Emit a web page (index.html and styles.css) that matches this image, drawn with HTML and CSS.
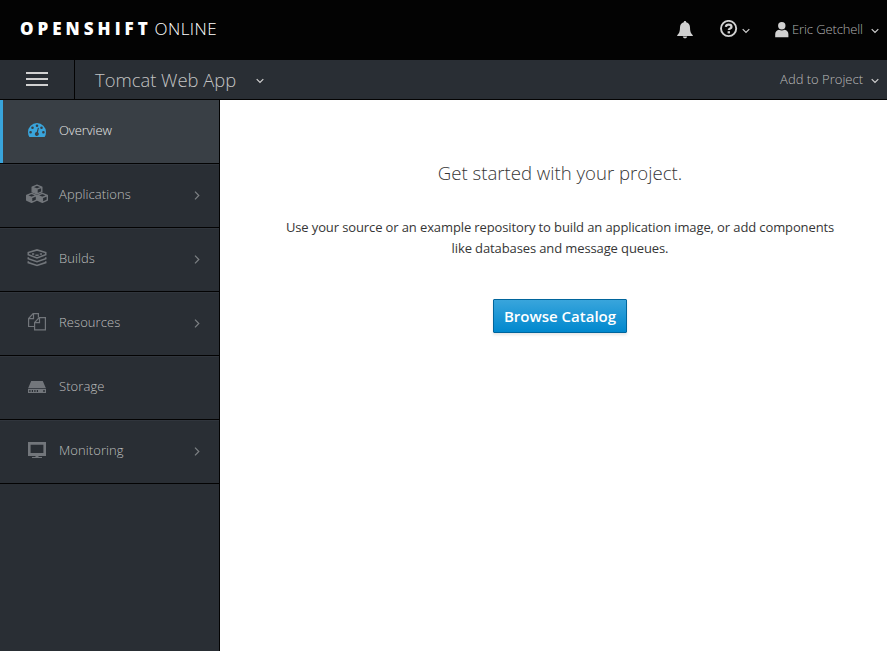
FILE: index.html
```html
<!DOCTYPE html>
<html lang="en">
<head>
<meta charset="utf-8">
<title>OpenShift Online</title>
<link rel="stylesheet" href="styles.css">
</head>
<body>
<header class="masthead">
  <div class="brand"><b>OPENSHIFT</b><span>ONLINE</span></div>
  <div class="utilities">
    <svg class="bell" width="16" height="18" viewBox="0 0 16 18"><path d="M8 0c.8 0 1.200.5 1.200 1.300C11.900 2 13 4 13 6.500c0 4 .8 5.800 2.800 7.700v.8H.2v-.8C2.200 12.300 3 10.500 3 6.500 3 4 4.100 2 6.800 1.300 6.800.5 7.200 0 8 0zM5.800 15.500h4.400C10 16.700 9.200 17.300 8 17.300s-2-.6-2.200-1.800z"/></svg>
    <svg class="help" width="18" height="18" viewBox="0 0 18 18"><circle cx="8.600" cy="8.500" r="7.600" fill="none" stroke="currentColor" stroke-width="1.900"/><path d="M5.900 6.900C6.100 5.300 7 4.700 8.700 4.700c1.700 0 2.800.8 2.800 2.200 0 1.800-2.700 1.500-2.700 3.200" fill="none" stroke="currentColor" stroke-width="2.300"/><rect x="7.600" y="11.200" width="2.400" height="2.200"/></svg>
    <svg class="chev help-chev" width="8" height="6" viewBox="0 0 8 6"><path d="M.7 1.200 4 4.500l3.300-3.300"/></svg>
    <svg class="person" width="14" height="17" viewBox="0 0 14 17"><circle cx="6.800" cy="3.700" r="3.700"/><path d="M.2 15.300v-3C.2 9.800 1.800 8.300 4 7.800c1.700 1 3.900 1 5.600 0 2.200.5 3.800 2 3.800 4.500v3z"/></svg>
    <span class="user">Eric Getchell</span>
    <svg class="chev user-chev" width="8" height="6" viewBox="0 0 8 6"><path d="M.7 1.200 4 4.500l3.300-3.300"/></svg>
  </div>
</header>
<div class="projectbar">
  <div class="toggle"><i></i><i></i><i></i></div>
  <div class="project">Tomcat Web App</div>
  <svg class="chev project-chev" width="8" height="6" viewBox="0 0 8 6"><path d="M.7 1.200 4 4.500l3.300-3.300"/></svg>
  <div class="add">Add to Project</div>
  <svg class="chev add-chev" width="8" height="6" viewBox="0 0 8 6"><path d="M.7 1.200 4 4.500l3.300-3.300"/></svg>
</div>
<div class="shell">
  <nav class="sidebar">
    <a class="item active">
      <svg class="icon" width="22" height="20" viewBox="0 0 22 20"><path fill-rule="evenodd" d="M3.400 17A8.600 8.600 0 0 1 2 12a9 9 0 0 1 18 0 8.600 8.600 0 0 1-1.400 5zM4.600 10.900a1.300 1.300 0 1 0 0 2.600 1.300 1.300 0 0 0 0-2.600zM6.500 6.400a1.300 1.300 0 1 0 0 2.600 1.300 1.300 0 0 0 0-2.600zM11 4.500a1.300 1.300 0 1 0 0 2.600 1.300 1.300 0 0 0 0-2.600zM15.500 6.400a1.300 1.300 0 1 0 0 2.600 1.300 1.300 0 0 0 0-2.600zM17.400 10.900a1.300 1.300 0 1 0 0 2.600 1.300 1.300 0 0 0 0-2.600zM12.900 8l-1-.3-1.200 4.300a2 2 0 1 0 1.200.3z"/></svg>
      <span>Overview</span>
    </a>
    <a class="item">
      <svg class="icon" width="22" height="20" viewBox="0 0 22 20"><g fill="none" stroke="currentColor" stroke-width="1.400" stroke-linejoin="round"><path d="m11 1.200 4.800 1.900v4.700L11 9.900 6.200 7.800V3.100zM6.200 3.200 11 5.200l4.800-2M11 5.200v4.500"/><path d="m5.600 9.400 4.900 2v4.700l-4.900 2.300-4.900-2.300v-4.700zM.7 11.500l4.900 2 4.900-2M5.600 13.500v4.700"/><path d="m16.400 9.400 4.900 2v4.700l-4.900 2.300-4.900-2.300v-4.700zM11.500 11.500l4.900 2 4.900-2M16.400 13.500v4.700"/></g><path d="m6.200 3.200 4.800 2v4.500L6.200 7.800zM.7 11.500l4.900 2v4.900L.7 16.100zM11.500 11.500l4.900 2v4.900l-4.900-2.300z"/></svg>
      <span>Applications</span>
      <svg class="arrow" width="6" height="9" viewBox="0 0 6 9"><path d="m1 .7 3.800 3.800L1 8.300"/></svg>
    </a>
    <a class="item">
      <svg class="icon" width="22" height="20" viewBox="0 0 22 20"><g fill="none" stroke="currentColor" stroke-width="1.600"><path d="M2.300 6.700V4.600L11 1.900l8.700 2.700v2.100L11 9.900zM2.300 9.200v1.500L11 13.700l8.700-3V9.200M2.300 13.200v1.400L11 17.400l8.700-2.800v-1.400"/><path d="M6 6h2.200M9.400 7.200h3.200M13.800 6H16"/></g></svg>
      <span>Builds</span>
      <svg class="arrow" width="6" height="9" viewBox="0 0 6 9"><path d="m1 .7 3.800 3.800L1 8.300"/></svg>
    </a>
    <a class="item">
      <svg class="icon" width="22" height="20" viewBox="0 0 22 20"><g fill="none" stroke="currentColor" stroke-width="1.200"><path d="M8.500 14.500H2.600V6.600L7.100 1.600h5.300v4M7.500 1.600v5H2.600"/><path d="M13.200 5.600h6.200v12.200H8.600v-7.200zM13.500 5.600v5H8.600"/></g></svg>
      <span>Resources</span>
      <svg class="arrow" width="6" height="9" viewBox="0 0 6 9"><path d="m1 .7 3.800 3.800L1 8.300"/></svg>
    </a>
    <a class="item">
      <svg class="icon" width="22" height="20" viewBox="0 0 22 20"><path fill-rule="evenodd" d="M5.200 5h11.600l3 7H2.200zM2 12.700h18V17H2zm1.300 1.300v2h1.200v-2zm2.500 0v2H7v-2zm2.500 0v2h1.200v-2zm2.500 0v2H12v-2zm6.500 0v2h1.400v-2z"/></svg>
      <span>Storage</span>
    </a>
    <a class="item">
      <svg class="icon" width="22" height="20" viewBox="0 0 22 20"><path fill-rule="evenodd" d="M2 2h18v14h-7.500v1H16v1H6v-1h3.500v-1H2zm2.600 2.800V13h12.800V4.800z"/></svg>
      <span>Monitoring</span>
      <svg class="arrow" width="6" height="9" viewBox="0 0 6 9"><path d="m1 .7 3.800 3.800L1 8.300"/></svg>
    </a>
  </nav>
  <main class="content">
    <h1>Get started with your project.</h1>
    <p>Use your source or an example repository to build an application image, or add components<br>like databases and message queues.</p>
    <button class="primary">Browse Catalog</button>
  </main>
</div>
</body>
</html>
```
FILE: styles.css
```css
* { box-sizing: border-box; }
body {
  margin: 0;
  height: 651px;
  display: flex;
  flex-direction: column;
  overflow: hidden;
  font-family: "Open Sans", sans-serif;
  font-size: 13px;
  background: #fff;
}
svg { display: block; flex: none; fill: currentColor; }
.masthead {
  height: 60px;
  flex: none;
  display: flex;
  justify-content: space-between;
  padding: 0 8px 0 20px;
  background: #030303;
  color: #d1d1d1;
}
.brand {
  display: flex;
  align-items: center;
  height: 57px;
  font-size: 17px;
  color: #fff;
  white-space: nowrap;
}
.brand b { width: 134.5px; font-weight: 800; letter-spacing: 4px; }
.brand span { font-weight: 300; letter-spacing: .45px; }
.utilities { display: flex; align-items: flex-start; white-space: nowrap; }
.bell { margin: 21px 27px 0 0; }
.help { margin: 20px 4px 0 0; }
.chev path {
  fill: none;
  stroke: currentColor;
  stroke-width: 1.2;
}
.help-chev { margin: 28px 25px 0 0; }
.person { margin: 22px 3px 0 0; }
.user {
  width: 71px;
  line-height: 20px;
  margin-top: 19px;
  font-weight: 300;
  letter-spacing: -.12px;
  color: #b0b0b0;
}
.user-chev { margin: 28px 0 0 8px; }
.projectbar {
  height: 40px;
  flex: none;
  display: flex;
  align-items: center;
  padding-right: 8px;
  background: #292e34;
  border-bottom: 1px solid #030303;
  color: #d1d1d1;
  white-space: nowrap;
}
.toggle {
  width: 75px;
  height: 39px;
  display: flex;
  flex-direction: column;
  gap: 4px;
  padding: 12px 26px 0;
  border-right: 1px solid #030303;
}
.toggle i { height: 2px; background: #d1d1d1; }
.project {
  width: 142px;
  margin-left: 20px;
  line-height: 39px;
  font-size: 18.4px;
  font-weight: 300;
  color: #c4c4c4;
}
.project-chev { margin: 3px 0 0 19px; }
.add { margin-left: auto; padding-bottom: 1px; font-weight: 300; color: #bababa; }
.add-chev { margin: 3px 0 0 8px; }
.shell { display: flex; flex: 1; }
.sidebar {
  width: 220px;
  flex: none;
  background: #292e34;
  border-right: 1px solid #030303;
}
.item {
  display: flex;
  align-items: flex-start;
  height: 64px;
  padding-left: 26px;
  border-bottom: 1px solid #030303;
  box-shadow: inset 0 1px #30353c;
  font-weight: 300;
  letter-spacing: .08px;
  color: #bebebe;
}
.item.active {
  background: #393f45;
  box-shadow: inset 3px 0 #39a5dc;
  letter-spacing: -.1px;
  color: #e8e8e8;
}
.item span { margin: 20px 0 0 11px; line-height: 20px; }
.icon { margin-top: 20px; color: #72767b; }
.active .icon { color: #39a5dc; }
.arrow { margin: 27px 19px 0 auto; color: #7d8083; }
.arrow path { fill: none; stroke: currentColor; stroke-width: 1.2; }
.content {
  flex: 1;
  display: flex;
  flex-direction: column;
  align-items: center;
  padding: 60px 0 0 13px;
  color: #363636;
}
h1 {
  margin: 0;
  line-height: 26px;
  font-size: 18.6px;
  font-weight: 300;
}
p {
  margin: 31px 0 40px;
  line-height: 21px;
  letter-spacing: -.115px;
  text-align: center;
  white-space: nowrap;
}
.primary {
  width: 134px;
  height: 34px;
  padding: 0;
  border: 1px solid #00659c;
  border-radius: 1px;
  background: linear-gradient(#39a5dc, #0088ce);
  box-shadow: 0 2px 3px rgba(3, 3, 3, .1);
  color: #fff;
  font: 600 15px "Open Sans", sans-serif;
  white-space: nowrap;
}
```
